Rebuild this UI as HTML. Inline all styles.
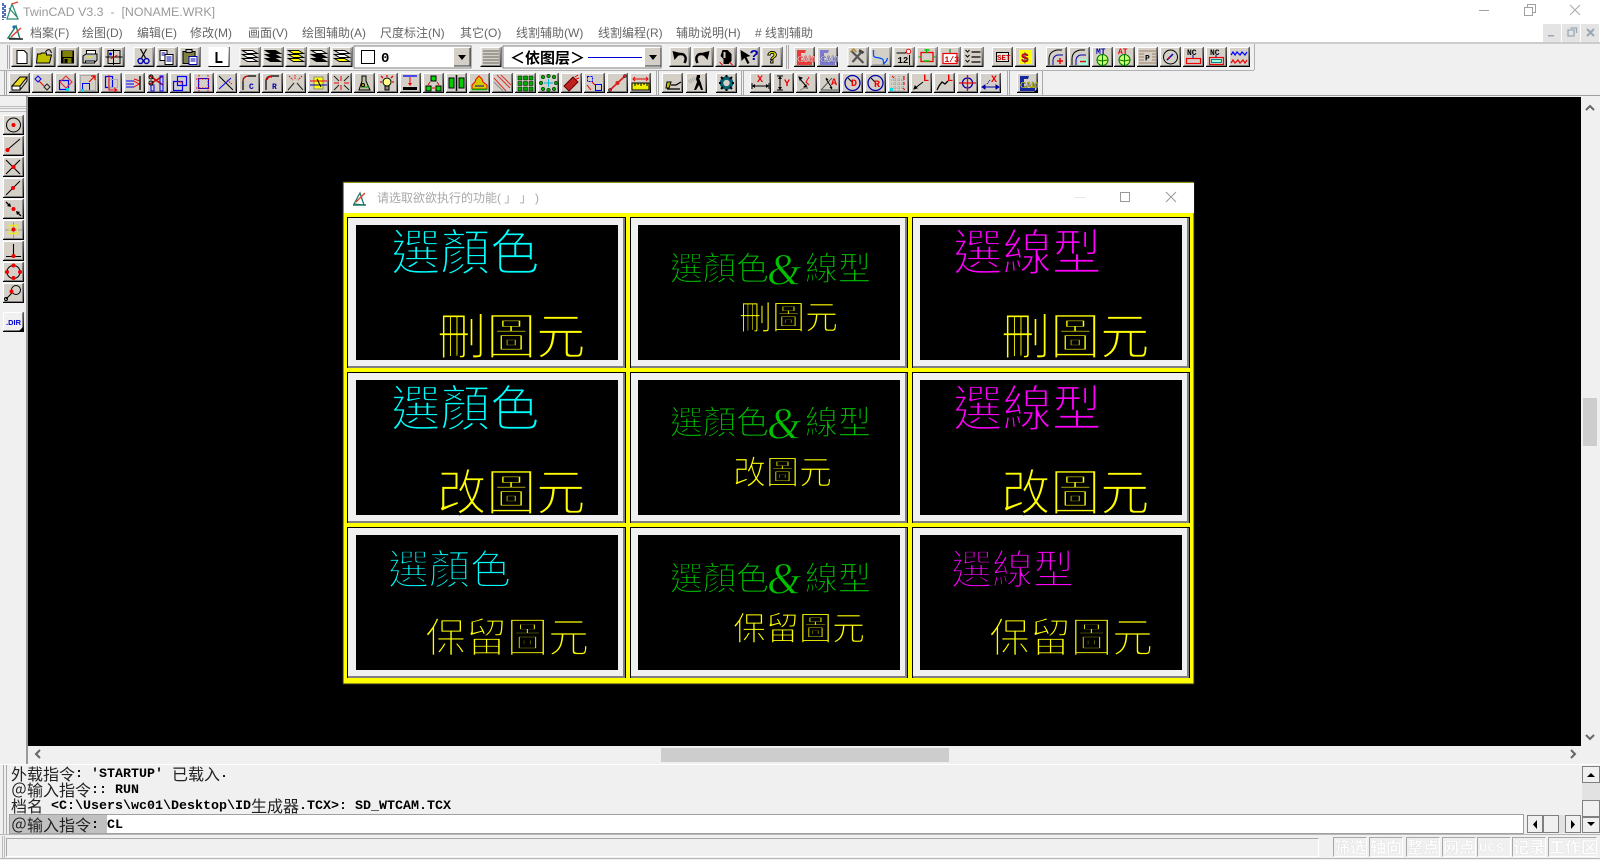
<!DOCTYPE html>
<html><head><meta charset="utf-8"><title>TwinCAD</title>
<style>
html,body{margin:0;padding:0;background:#f0f0f0;width:1600px;height:860px;overflow:hidden}
svg{display:block;position:absolute;left:0;top:0}
text{white-space:pre}
.m{font:bold 13.33px "Liberation Mono",monospace;fill:#000}
.c{font:16px "Noto Sans CJK SC",sans-serif;fill:#222}
.u{font:12px "Liberation Sans","Noto Sans CJK SC",sans-serif;fill:#666}
.s{font:bold 16px "Noto Sans CJK SC",sans-serif;fill:#fff;stroke:#d8d8d8;stroke-width:.3}
.k{font-family:"Noto Sans CJK TC",sans-serif;stroke:#000;paint-order:normal}
.b{font:bold 8px "Liberation Mono",monospace}
</style></head><body>
<svg width="1600" height="860" viewBox="0 0 1600 860" xmlns="http://www.w3.org/2000/svg">
<defs>
<g id="f"><path fill="#d4d0c8" d="M0 0h21v20H0z"/><path fill="#fff" d="M0 0h19v1H1v17H0z"/><path fill="#808080" d="M19 1h1v18H1v-1h18z"/><path fill="#000" d="M20.500 0h.5v20H0v-1h20z"/></g>
<g id="ly"><path d="M3 3.500h10l5 3H8zM3 7.500h10l5 3H8zM3 11.500h10l5 3H8z" stroke="#000" stroke-width="1"/></g>
</defs>
<rect width="1600" height="860" fill="#f0f0f0"/>
<!-- title -->
<rect width="1600" height="42" fill="#fff"/>
<path d="M3 3v17M5 5v13" stroke="#1a3ea8" stroke-width="1.500" stroke-dasharray="3 1"/><path d="M7 19l5-15 6 15zM9 8l8 9" fill="none" stroke="#2a8a70" stroke-width="1.200"/><path d="M12 4l6-2" stroke="#e04030" stroke-width="1.200"/>
<text x="23" y="16" style="font:12.400px 'Liberation Sans',sans-serif;fill:#9a9a9a">TwinCAD V3.3  -  [NONAME.WRK]</text>
<path d="M1479 10.500h10" stroke="#a0a0a0"/><path d="M1524.500 7.500h8v8h-8zM1527.500 7.500v-3h8v8h-3" fill="none" stroke="#a0a0a0"/><path d="M1570 5l10 10M1580 5l-10 10" stroke="#a8a8a8" fill="none"/>
<path d="M1543 24h18v18h-18zM1562 24h18v18h-18zM1581 24h18v18h-18z" fill="#e4e4e4"/>
<path d="M1548 35h6v1.500h-6z" fill="#9aa6b4"/><path d="M1568 30h6v6h-6zM1570.500 28h6v5" fill="none" stroke="#9aa6b4" stroke-width="1.300"/><path d="M1587 29l7 7M1594 29l-7 7" stroke="#9aa6b4" stroke-width="2"/>
<!-- menu -->
<g transform="translate(7 24)"><path d="M1 14l8-12 4 13z" fill="none" stroke="#227a66" stroke-width="1.400"/><path d="M4 13l10-9" stroke="#e04030" stroke-width="1.500"/><path d="M2 15h14" stroke="#222" stroke-width="1.500"/><circle cx="7" cy="3" r="1.600" fill="#1f6fb0"/></g>
<g class="u">
<text class="u" x="30" y="37">档案(F)</text><text class="u" x="82" y="37">绘图(D)</text><text class="u" x="137" y="37">编辑(E)</text><text class="u" x="190" y="37">修改(M)</text><text class="u" x="248" y="37">画面(V)</text><text class="u" x="302" y="37">绘图辅助(A)</text><text class="u" x="380" y="37">尺度标注(N)</text><text class="u" x="460" y="37">其它(O)</text><text class="u" x="516" y="37">线割辅助(W)</text><text class="u" x="598" y="37">线割编程(R)</text><text class="u" x="676" y="37">辅助说明(H)</text><text class="u" x="755" y="37"># 线割辅助</text>
</g>
<!-- toolbars chrome -->
<path d="M0 43h1600" stroke="#a8a8a8" fill="none"/>
<path d="M0 70.500h1254M1254.500 44v26" stroke="#b0b0b0" fill="none"/>
<path d="M7.500 45v24M9.500 45v24M4.500 71v24M6.500 71v24" stroke="#a8a8a8" fill="none"/>
<path d="M0 95.500h1600" stroke="#a0a0a0"/>
<path d="M786.500 45v24M788.500 45v24M656.500 71v24M658.500 71v24M741.500 71v24M743.500 71v24M1007.500 71v24M1009.500 71v24M1042.500 71v24" stroke="#a8a8a8" fill="none"/>
<!-- toolbar 1 -->
<g transform="translate(11.500 47)"><use href="#f"/><path d="M5.500 3.500h7l3 3v10h-10z" fill="#fff" stroke="#000"/></g>
<g transform="translate(34.500 47)"><use href="#f"/><path d="M2 16l1-9h3l1-1h5v2h5l-2 8z" fill="#c0c000" stroke="#000"/><path d="M11 5c2-3 4-3 5-1l1 2" fill="none" stroke="#000"/></g>
<g transform="translate(57.500 47)"><use href="#f"/><path d="M3.500 3.500h13v13h-13z" fill="#000"/><path d="M5 4h10v6H5zM6 11h8v5H6z" fill="#808000"/><path d="M7 12h3v4H7z" fill="#000"/></g>
<g transform="translate(80.500 47)"><use href="#f"/><path d="M6 3.500h9v5H6z" fill="#fff" stroke="#000"/><path d="M2.500 9l3-2h11v6l-3 3h-11z" fill="#c0c0c0" stroke="#000"/><path d="M6 10h6" stroke="#ee0"/><path d="M5 14h9v2H5z" fill="#fff" stroke="#000"/></g>
<g transform="translate(103.500 47)"><use href="#f"/><path d="M4.500 3.500h12v13h-12z" fill="#d4d0c8" stroke="#000"/><path d="M10 2v16M2 10h17" stroke="#000"/><path d="M7 12l7-4" stroke="#e00"/><circle cx="7" cy="7" r="1.500" fill="#00f"/></g>
<g transform="translate(133.500 47)"><use href="#f"/><path d="M7 2l5 9M13 2l-5 9" stroke="#000" stroke-width="1.200"/><circle cx="7" cy="14" r="2.500" fill="none" stroke="#00a" stroke-width="1.400"/><circle cx="13" cy="14" r="2.500" fill="none" stroke="#00a" stroke-width="1.400"/></g>
<g transform="translate(156.500 47)"><use href="#f"/><path d="M3.500 3.500h7v10h-7z" fill="#fff" stroke="#000"/><path d="M8.500 7.500h8v10h-8z" fill="#fff" stroke="#000"/><path d="M10 10h5M10 12h5M10 14h5M5 6h4M5 8h3" stroke="#00a"/></g>
<g transform="translate(179.500 47)"><use href="#f"/><path d="M3.500 4.500h12v12h-12z" fill="#808040" stroke="#000"/><path d="M6.500 2.500h6v3h-6z" fill="#c0c0c0" stroke="#000"/><path d="M9.500 9.500h8v8h-8z" fill="#fff" stroke="#00a"/><path d="M11 12h5M11 14h5" stroke="#00a"/></g>
<g transform="translate(208.500 47)"><use href="#f"/><rect x="1" y="1" width="19" height="18" fill="#fff"/><path d="M8 5v10h6" fill="none" stroke="#000" stroke-width="2"/></g>
<g transform="translate(239.500 47)"><use href="#f"/><g fill="#fff"><use href="#ly"/></g></g>
<g transform="translate(262.500 47)"><use href="#f"/><g fill="#000"><use href="#ly"/></g></g>
<g transform="translate(285.500 47)"><use href="#f"/><g fill="#ff0"><use href="#ly"/></g></g>
<g transform="translate(308.500 47)"><use href="#f"/><path d="M3 3.500h10l5 3H8z" fill="#fff" stroke="#000"/><path d="M3 7.500h10l5 3H8zM3 11.500h10l5 3H8z" fill="#000" stroke="#000"/></g>
<g transform="translate(331.500 47)"><use href="#f"/><path d="M3 3.500h10l5 3H8zM3 7.500h10l5 3H8z" fill="#fff" stroke="#000"/><path d="M3 11.500h10l5 3H8z" fill="#ff0" stroke="#000"/></g>
<rect x="354" y="46" width="117" height="22" fill="#fff" stroke="#808080"/>
<rect x="361.500" y="50.500" width="13" height="13" fill="#fff" stroke="#000"/>
<text class="m" x="381" y="62" style="font-size:14px">0</text>
<g transform="translate(454 48)"><rect width="16" height="18" fill="#d4d0c8"/><path d="M0 18h16V0" stroke="#333" fill="none"/><path d="M4 7h8l-4 5z"/></g>
<g transform="translate(480.500 47)"><use href="#f"/><path d="M3 4h15M3 7h15M3 10h15M3 13h15M3 16h15" stroke="#000" stroke-dasharray="1 1"/></g>
<rect x="503" y="46" width="158" height="22" fill="#fff" stroke="#808080"/>
<text x="510" y="63" style="font:bold 15px 'Noto Sans CJK TC',sans-serif">＜依图层＞</text>
<path d="M588 57.500h54" stroke="#00d"/>
<g transform="translate(645 48)"><rect width="16" height="18" fill="#d4d0c8"/><path d="M0 18h16V0" stroke="#333" fill="none"/><path d="M4 7h8l-4 5z"/></g>
<g transform="translate(669.500 47)"><use href="#f"/><path d="M15 16c3-6 0-11-8-8" fill="none" stroke="#000" stroke-width="2.500"/><path d="M3 4l2 9 6-7z"/></g>
<g transform="translate(692.500 47)"><use href="#f"/><path d="M5 16c-3-6 0-11 8-8" fill="none" stroke="#000" stroke-width="2.500"/><path d="M17 4l-2 9-6-7z"/></g>
<g transform="translate(715.500 47)"><use href="#f"/><path d="M7 3h5l4 4v7l-3 3H8V12L5 9z"/><path d="M4 15l3 3M14 15l3 3" stroke="#e00"/><path d="M8 5h2v6H8z" fill="#ccc"/></g>
<g transform="translate(738.500 47)"><use href="#f"/><path d="M2 3l10 6-4 1 3 6-2 1-3-6-3 3z"/><text x="11" y="13" style="font:bold 15px 'Liberation Sans';fill:#00a">?</text></g>
<g transform="translate(761.500 47)"><use href="#f"/><text x="5.500" y="16" style="font:bold 17px 'Liberation Sans';fill:#ff0;stroke:#000;stroke-width:.9">?</text></g>
<g transform="translate(794 47)"><use href="#f"/><path d="M3 3h9l-1 3H7v9h11v3H3z" fill="#f02828" opacity=".9"/><text x="3" y="15" style="font:bold 8px 'Liberation Sans';fill:#fff;stroke:#c00;stroke-width:.4">CAM</text></g>
<g transform="translate(817 47)"><use href="#f"/><path d="M3 3h9l-1 3H7v9h11v3H3z" fill="#7070d0" opacity=".9"/><text x="3" y="15" style="font:bold 8px 'Liberation Sans';fill:#fff;stroke:#338;stroke-width:.4">CAM</text></g>
<g transform="translate(847.500 47)"><use href="#f"/><path d="M4 4l12 12M5 15L14 5" stroke="#555" stroke-width="2.200"/><path d="M12 2l5 3-2 2-4-2z" fill="#444"/><path d="M3 5l3-3 3 3" stroke="#b08a30" fill="none" stroke-width="1.500"/></g>
<g transform="translate(870.500 47)"><use href="#f"/><path d="M3 3v5c0 3 3 2 6 3s4 1 4 4v2l3-3 1-3" fill="none" stroke="#0050ff" stroke-width="1.300"/><path d="M2 18h16" stroke="#888"/></g>
<g transform="translate(893.500 47)"><use href="#f"/><path d="M3 6h9l2-2M16 8v10" fill="none" stroke="#000"/><circle cx="15" cy="4.500" r="2.200" fill="#fff" stroke="#e00"/><text x="4" y="16" class="b" style="font-size:9px">12</text></g>
<g transform="translate(916.500 47)"><use href="#f"/><rect x="4.500" y="5.500" width="12" height="9" fill="none" stroke="#e00" stroke-width="1.300"/><path d="M10 2v4M2 10h3M16 10h3" stroke="#0a0"/><path d="M8 3h5M7 14h6" stroke="#0c0" stroke-width="1.500"/></g>
<g transform="translate(939.500 47)"><use href="#f"/><path d="M10.500 2v4" stroke="#070"/><rect x="3.500" y="6.500" width="14" height="10" fill="#fff" stroke="#e00" stroke-width="1.200"/><text x="5" y="15" class="b" style="fill:#c00">1/3</text></g>
<g transform="translate(962.500 47)"><use href="#f"/><path d="M9 5h9M9 10h9M9 15h9" stroke="#000" stroke-width="1.300"/><path d="M3 3l2 2 2-2M3 8l2 2 2-2M3 13l2 2 2-2" fill="none" stroke="#000"/></g>
<g transform="translate(992 47)"><use href="#f"/><rect x="4.500" y="5.500" width="12" height="9" fill="#e8e4dc" stroke="#000"/><text x="5" y="13" class="b" style="font-size:7.500px;fill:#c00">SET</text></g>
<g transform="translate(1015 47)"><use href="#f"/><rect x="4" y="3" width="13" height="14" fill="#ff0"/><text x="6" y="15" style="font:bold 13px 'Liberation Mono';fill:#e00;stroke:#00a;stroke-width:.3">$</text></g>
<g transform="translate(1046 47)"><use href="#f"/><path d="M3 18v-6c0-5 3-8 8-9h5" fill="none" stroke="#000"/><path d="M7 18v-5c0-2 2-5 5-5h5" fill="none" stroke="#00a"/><path d="M14 11v6M11 14h6" stroke="#e00" stroke-width="1.500"/></g>
<g transform="translate(1069 47)"><use href="#f"/><path d="M3 18v-6c0-5 3-8 8-9h5" fill="none" stroke="#000"/><path d="M7 18v-5c0-2 2-5 5-5h5" fill="none" stroke="#00a"/><rect x="10" y="12" width="8" height="6" fill="#9fd"/><path d="M11 14.500h6" stroke="#e00" stroke-width="1.500"/></g>
<g transform="translate(1092 47)"><use href="#f"/><text x="4" y="7" class="b" style="fill:#00a">MT</text><circle cx="10.500" cy="13" r="5.500" fill="#cf6" stroke="#070"/><path d="M10.500 8v10M5.500 13l5 1 5-1" stroke="#070" fill="none"/></g>
<g transform="translate(1114 47)"><use href="#f"/><text x="4" y="7" class="b" style="fill:#e00">AT</text><circle cx="10.500" cy="13" r="5.500" fill="#cf6" stroke="#070"/><path d="M10.500 8v10M5.500 13l5 1 5-1" stroke="#070" fill="none"/></g>
<g transform="translate(1137 47)"><use href="#f"/><path d="M2 4h17M2 7h17M2 10h17M2 13h17M2 16h17" stroke="#a08060"/><rect x="7" y="6" width="8" height="8" fill="#d4d0c8"/><text x="8" y="13.500" class="b">P</text></g>
<g transform="translate(1160 47)"><use href="#f"/><circle cx="10.500" cy="10" r="7" fill="none" stroke="#000"/><path d="M7 13l6-6" stroke="#00a" stroke-width="1.500"/><circle cx="9" cy="11" r="1" fill="#e00"/></g>
<g transform="translate(1183 47)"><use href="#f"/><text x="4" y="8" class="b">NC</text><path d="M10 8v3" stroke="#00a"/><rect x="3.500" y="11.500" width="14" height="5" fill="none" stroke="#e00" stroke-width="1.200"/></g>
<g transform="translate(1206 47)"><use href="#f"/><text x="4" y="8" class="b">NC</text><path d="M10 8v3" stroke="#00a"/><rect x="3.500" y="10.500" width="14" height="7" fill="none" stroke="#e00" stroke-width="1.200"/><rect x="5.500" y="12.500" width="10" height="3" fill="#9fd" stroke="#088"/></g>
<g transform="translate(1229 47)"><use href="#f"/><path d="M2 8l2-3 2 3 2-3 3 3 2-3 3 3 2-3" fill="none" stroke="#00f" stroke-width="1.200"/><path d="M2 16l2-3 2 3 3-3 2 3 3-3 2 3 2-3" fill="none" stroke="#e00" stroke-width="1.200"/></g>
<!-- toolbar 2 -->
<g transform="translate(9 73)"><use href="#f"/><path d="M3 13l8-9h7l-7 9z" fill="#e8d820" stroke="#000"/><path d="M3 13v4h8v-4z" fill="#fff" stroke="#000"/><path d="M11 17l7-9V4" fill="none" stroke="#000"/></g>
<g transform="translate(32 73)"><use href="#f"/><path d="M3 6l3-3 3 3-3 3z" fill="none" stroke="#00f"/><path d="M7 8l5 5" stroke="#e00"/><path d="M12 14l3-3 3 3-3 3z" fill="none" stroke="#222"/></g>
<g transform="translate(55 73)"><use href="#f"/><path d="M4.500 7.500h9v9h-9z" fill="none" stroke="#00f" stroke-width="1.200"/><path d="M11 3l6 6-6 6-6-6z" fill="none" stroke="#e03030" stroke-width="1.100"/><rect x="11" y="15" width="3" height="3" fill="#0dd"/></g>
<g transform="translate(78 73)"><use href="#f"/><path d="M4.500 10.500h7v7h-7z" fill="none" stroke="#00f"/><path d="M2.500 2.500h15v15h-15z" fill="none" stroke="#aaa"/><path d="M11 9l6-6M13 3h4v4" fill="none" stroke="#e00" stroke-width="1.200"/><rect x="3" y="16" width="3" height="3" fill="#0dd"/></g>
<g transform="translate(101 73)"><use href="#f"/><path d="M4.500 3.500h7v11h-7z" fill="none" stroke="#00f" stroke-width="1.200"/><path d="M7.500 6.500h9v8h-9z" fill="none" stroke="#aaa"/><path d="M8 2v15h8M13 15l3 2-3 2" fill="none" stroke="#e00"/></g>
<g transform="translate(124 73)"><use href="#f"/><path d="M2 8h8M2 11h8M2 14h8" stroke="#00f"/><path d="M10 8l5 3-5 3" fill="none" stroke="#e00"/><path d="M16 3v14" stroke="#000" stroke-width="1.300"/><path d="M10 6l6 2" stroke="#e00"/></g>
<g transform="translate(147 73)"><use href="#f"/><path d="M3 3l13 9M3 11l13-8" stroke="#c00" stroke-width="1.500"/><rect x="4" y="12" width="3" height="6" fill="none" stroke="#00f"/><rect x="13" y="3" width="3" height="15" fill="none" stroke="#00f"/><circle cx="4" cy="4" r="2" fill="none" stroke="#000"/><circle cx="4" cy="10" r="2" fill="none" stroke="#000"/></g>
<g transform="translate(170 73)"><use href="#f"/><path d="M3.500 8.500h9v9h-9z" fill="none" stroke="#00f" stroke-width="1.200"/><path d="M7.500 3.500h9v9h-9z" fill="none" stroke="#00f" stroke-width="1.200"/><path d="M7 9h5v3" fill="none" stroke="#e00" stroke-dasharray="1.500 1"/></g>
<g transform="translate(193 73)"><use href="#f"/><path d="M5.500 5.500h10v10h-10z" fill="none" stroke="#00f"/><path d="M3 6h15M3 15h15M6 2v17M15 2v17" stroke="#e00" stroke-dasharray="1.500 1.500"/></g>
<g transform="translate(216 73)"><use href="#f"/><path d="M3 3l14 14" stroke="#000"/><path d="M3 16l12-11" stroke="#00f"/><path d="M11 7l5 4" stroke="#e00" stroke-dasharray="1.500 1"/></g>
<g transform="translate(239 73)"><use href="#f"/><path d="M4 17V8c0-3 2-5 6-5h7" fill="none" stroke="#000" stroke-width="1.200"/><path d="M4 8c0-2 2-5 5-5" stroke="#e00" fill="none"/><text x="10" y="16" class="b" style="fill:#00a">C</text></g>
<g transform="translate(262 73)"><use href="#f"/><path d="M4 17V8c0-3 2-5 6-5h7" fill="none" stroke="#000" stroke-width="1.200"/><path d="M5 7c0-2 2-4 5-3" stroke="#e00" fill="none" stroke-width="1.600"/><text x="10" y="16" class="b" style="fill:#00a">R</text></g>
<g transform="translate(285 73)"><use href="#f"/><path d="M3 17L9 10M18 17l-6-7" stroke="#222"/><path d="M4 3l4 4M17 3l-4 4M10 2v5" stroke="#e00" stroke-dasharray="1.500 1"/></g>
<g transform="translate(308 73)"><use href="#f"/><rect x="6" y="4" width="9" height="12" fill="#ff0" stroke="#888"/><path d="M2 8h17" stroke="#e00"/><path d="M2 12h17" stroke="#00a"/><path d="M9 6l4 8" stroke="#000"/></g>
<g transform="translate(331 73)"><use href="#f"/><path d="M3 3l5 5M18 3l-5 5M3 17l5-5M18 17l-5-5" stroke="#222"/><path d="M10 3v5M10 12v5M3 10h5M13 10h5" stroke="#e00"/></g>
<g transform="translate(354 73)"><use href="#f"/><path d="M5 17l3-9V3h4v5l4 9z" fill="#c0c0a0" stroke="#000"/><path d="M7 14h8" stroke="#080"/><circle cx="9" cy="12" r="1.500" fill="#e0c000" stroke="#000"/></g>
<g transform="translate(377 73)"><use href="#f"/><circle cx="10" cy="9" r="4" fill="#ff8" stroke="#000"/><path d="M8 13h4v4H8z" fill="#888" stroke="#000"/><path d="M10 2v2M3 9h2M15 9h2M4 3l2 2M16 3l-2 2" stroke="#e00" stroke-width="1.300"/></g>
<g transform="translate(400 73)"><use href="#f"/><path d="M3 3h14" stroke="#00f" stroke-width="1.300"/><path d="M10 4v8" stroke="#e00"/><path d="M8 10l2 3 2-3z" fill="#e00"/><rect x="3" y="14" width="14" height="3" fill="#000"/></g>
<g transform="translate(423 73)"><use href="#f"/><rect x="8" y="3" width="5" height="5" fill="#0d0" stroke="#000"/><rect x="3" y="13" width="5" height="5" fill="#0d0" stroke="#000"/><rect x="13" y="13" width="5" height="5" fill="#0d0" stroke="#000"/><path d="M7 9l-2 3M14 9l2 3M9 15h3" stroke="#e00"/></g>
<g transform="translate(446 73)"><use href="#f"/><rect x="3" y="5" width="5" height="10" fill="#0c0" stroke="#000"/><rect x="13" y="5" width="5" height="10" fill="#0c0" stroke="#000"/><path d="M10.500 2v16" stroke="#000" stroke-width="1.500"/></g>
<g transform="translate(469 73)"><use href="#f"/><path d="M3 12l3-3 1-3 3-3 3 3 1 3 4 3v4H3z" fill="#d8c800" stroke="#e00"/><path d="M6 13h9" stroke="#00a"/><path d="M3 16.500h15" stroke="#0a0" stroke-width="1.500"/></g>
<g transform="translate(492 73)"><use href="#f"/><path d="M2 5l12 13M5 2l13 13M9 2l10 10" stroke="#e03030"/><path d="M2 9l9 9" stroke="#888"/></g>
<g transform="translate(515 73)"><use href="#f"/><path d="M3 3h4v4H3zM8.500 3h4v4h-4zM14 3h4v4h-4zM3 8.500h4v4H3zM8.500 8.500h4v4h-4zM14 8.500h4v4h-4zM3 14h4v4H3zM8.500 14h4v4h-4zM14 14h4v4h-4z" fill="#0a0" stroke="#000" stroke-width=".5"/></g>
<g transform="translate(538 73)"><use href="#f"/><g fill="#0a0" stroke="#000" stroke-width=".5"><circle cx="5" cy="4" r="1.800"/><circle cx="10.500" cy="3" r="1.800"/><circle cx="16" cy="4" r="1.800"/><circle cx="3" cy="10" r="1.800"/><circle cx="18" cy="10" r="1.800"/><circle cx="5" cy="16" r="1.800"/><circle cx="10.500" cy="17" r="1.800"/><circle cx="16" cy="16" r="1.800"/></g><path d="M6 10h9M10.500 6v8" stroke="#0bd"/></g>
<g transform="translate(561 73)"><use href="#f"/><path d="M3 13l9-9 5 5-9 9z" fill="#c02020" stroke="#600"/><path d="M14 4l3-2M15 6l3-1" stroke="#e00"/></g>
<g transform="translate(584 73)"><use href="#f"/><path d="M3.500 3.500h5v5h-5z" fill="none" stroke="#00f" stroke-dasharray="2 1"/><path d="M11.500 11.500h6v6h-6z" fill="none" stroke="#00f"/><path d="M8 9l3 3" stroke="#e00"/><path d="M3 12l4 5" stroke="#e00"/></g>
<g transform="translate(607 73)"><use href="#f"/><path d="M3 17L18 3" stroke="#e02020" stroke-width="1.800"/><circle cx="10.500" cy="10" r="2" fill="#e02020"/><circle cx="3" cy="17" r="1.500" fill="#e02020" stroke="#000" stroke-width=".5"/><circle cx="18" cy="3" r="1.500" fill="#e02020" stroke="#000" stroke-width=".5"/></g>
<g transform="translate(630 73)"><use href="#f"/><path d="M3 6h15M5 4l-2 2 2 2M16 4l2 2-2 2" fill="none" stroke="#e00"/><rect x="2" y="10" width="17" height="7" fill="#ee0" stroke="#000"/><path d="M5 10v3M8 10v2M11 10v3M14 10v2M17 10v3" stroke="#000"/></g>
<g transform="translate(662 73)"><use href="#f"/><path d="M5 9l-1 6h3l2-6z" fill="#c8c000" stroke="#000"/><path d="M9 12h5l5-3M5 16h13" fill="none" stroke="#000" stroke-width="1.300"/></g>
<g transform="translate(686 73)"><use href="#f"/><path d="M3 9l7-4" stroke="#aaa" stroke-width="4" stroke-dasharray="1 1"/><path d="M11 2h3v3h-1l2 5 2 7h-2l-2-5-3 5H8l3-8-1-3z"/></g>
<g transform="translate(716 73)"><use href="#f"/><circle cx="10.500" cy="10" r="5" fill="none" stroke="#006070" stroke-width="3.500"/><g stroke="#000" stroke-width="2"><path d="M10.500 2v2M10.500 16v2M3 10h2M16 10h2M5 4l2 2M16 4l-2 2M5 16l2-2M16 16l-2-2"/></g></g>
<g transform="translate(750 73)"><use href="#f"/><text x="7" y="9" class="b" style="font-size:10px;fill:#e00">X</text><path d="M2 13h17M2 10v6M19 10v6" stroke="#000"/><path d="M2 13l3-2v4zM19 13l-3-2v4z"/></g>
<g transform="translate(773 73)"><use href="#f"/><path d="M7 3v14M4 3h6M4 17h6" stroke="#000"/><path d="M7 3l-2 3h4zM7 17l-2-3h4z"/><text x="11" y="13" class="b" style="font-size:10px;fill:#e00">Y</text></g>
<g transform="translate(796 73)"><use href="#f"/><path d="M3 5l8 9M3 4l3 1-2 2zM11 15l-3-1 2-2z" stroke="#000" fill="#000"/><path d="M13 4l-3 5 3 3" fill="none" stroke="#e00"/><path d="M4 17l7-3" stroke="#888"/></g>
<g transform="translate(819 73)"><use href="#f"/><path d="M2 17h17M2 17L13 5" stroke="#555"/><path d="M7 6l6 9M7 5l2 2M13 16l-2-2" stroke="#000"/><text x="12" y="12" class="b" style="font-size:10px;fill:#e00">A</text></g>
<g transform="translate(842 73)"><use href="#f"/><circle cx="10.500" cy="10" r="7.500" fill="none" stroke="#00a" stroke-width="1.300"/><path d="M6 5l4 4" stroke="#000"/><text x="9" y="13" class="b" style="font-size:10px;fill:#e00">D</text></g>
<g transform="translate(865 73)"><use href="#f"/><circle cx="10.500" cy="10" r="7.500" fill="none" stroke="#00a" stroke-width="1.300"/><path d="M6 5l4 4" stroke="#000"/><text x="9" y="14" class="b" style="font-size:10px;fill:#e00">R</text></g>
<g transform="translate(888 73)"><use href="#f"/><path d="M3 7h14M3 11h14M3 15h14M7 3v15M11 3v15M15 3v15" stroke="#999" stroke-dasharray="1 1"/><path d="M4 3l2 2M16 3v4M16 9v3M15 15l2 2" stroke="#e00"/><rect x="2" y="15" width="3" height="3" fill="#0dd"/></g>
<g transform="translate(911 73)"><use href="#f"/><path d="M3 16l9-7M3 16l1-3 2 2z" fill="#000" stroke="#000"/><text x="12" y="8" class="b" style="font-size:10px;fill:#e00">L</text></g>
<g transform="translate(934 73)"><use href="#f"/><path d="M3 17l2-4 3-4 3 2 3-3" fill="none" stroke="#000" stroke-width="1.300"/><text x="13" y="8" class="b" style="font-size:10px;fill:#e00">L</text></g>
<g transform="translate(957 73)"><use href="#f"/><circle cx="10.500" cy="10" r="5" fill="none" stroke="#00a" stroke-width="1.300"/><path d="M2 10h17M10.500 2v16" stroke="#e00" stroke-width="1.300"/></g>
<g transform="translate(980 73)"><use href="#f"/><path d="M2 14h17M2 14l3-2v4zM19 14l-3-2v4z" stroke="#00a" fill="#00a"/><path d="M7 11l3-4" stroke="#00a" stroke-dasharray="1 1"/><text x="11" y="9" class="b" style="font-size:10px;fill:#e00">X</text></g>
<g transform="translate(1017 73)"><use href="#f"/><path d="M3 3h9l-1 3H7v9h11v3H3z" fill="#1428a0"/><text x="3" y="15" style="font:bold 8px 'Liberation Sans';fill:#ee0;stroke:#006;stroke-width:.3">CAM</text><path d="M17 19l3-3v3z" fill="#000"/></g>
<!-- left toolbar -->
<rect x="0" y="96" width="28" height="668" fill="#f0f0f0"/>
<path d="M0 106.500h26M0 108.500h26M0 111.500h26" stroke="#bdbdbd"/>
<path d="M27 96v668" stroke="#9a9a9a" stroke-width="2"/>
<g transform="translate(3 115)"><use href="#f"/><circle cx="10.500" cy="10" r="7" fill="none" stroke="#000"/><circle cx="10.500" cy="10" r="2" fill="#e00"/></g>
<g transform="translate(3 136)"><use href="#f"/><path d="M3 15L17 3" stroke="#000"/><circle cx="4.500" cy="14" r="2" fill="#e00"/></g>
<g transform="translate(3 157)"><use href="#f"/><path d="M3 3l14 14M17 3L3 17" stroke="#000" stroke-width="1.100"/><circle cx="10.500" cy="10" r="2" fill="#e00"/></g>
<g transform="translate(3 178)"><use href="#f"/><path d="M3 17L17 3" stroke="#000"/><circle cx="10" cy="10" r="2" fill="#e00"/></g>
<g transform="translate(3 199)"><use href="#f"/><path d="M3 3l4 4M18 17l-4-4" stroke="#000" stroke-width="1.300"/><path d="M8 8l-4-1 3-3zM13 12l4 1-3 3z"/><circle cx="10.500" cy="10" r="2" fill="#e00"/></g>
<g transform="translate(3 220)"><use href="#f"/><path d="M10.500 2v16M2 10h17" stroke="#999"/><rect x="6.500" y="5.500" width="8" height="8" fill="none" stroke="#ee0" stroke-width="1.500"/><circle cx="10.500" cy="9.500" r="2" fill="#e00"/></g>
<g transform="translate(3 241)"><use href="#f"/><path d="M10.500 3v13M3 15.500h15" stroke="#000" stroke-width="1.100"/><circle cx="10.500" cy="15" r="2" fill="#e00"/></g>
<g transform="translate(3 262)"><use href="#f"/><circle cx="10.500" cy="10" r="6.500" fill="none" stroke="#000"/><g fill="#e00"><circle cx="10.500" cy="3.500" r="2"/><circle cx="10.500" cy="16" r="2"/><circle cx="4" cy="10" r="2"/><circle cx="17" cy="10" r="2"/></g></g>
<g transform="translate(3 283)"><use href="#f"/><circle cx="13" cy="7" r="4.500" fill="none" stroke="#000"/><path d="M3 16l6-6" stroke="#000"/><circle cx="8.500" cy="8.500" r="2" fill="#e00"/><circle cx="3" cy="16" r="1.500" fill="none" stroke="#000"/></g>
<g transform="translate(3 312)"><use href="#f"/><rect x="1" y="1" width="18" height="17" fill="#f0f0f0"/><text x="3" y="13" style="font:bold 7.500px 'Liberation Sans';fill:#0000d0">.DIR</text><path d="M16 19l4-4v4z" fill="#000"/></g>
<!-- canvas -->
<rect x="28" y="97" width="1553" height="649" fill="#000"/>
<!-- scrollbars -->
<rect x="1581" y="97" width="19" height="667" fill="#f0f0f0"/>
<rect x="28" y="746" width="1553" height="18" fill="#f0f0f0"/>
<rect x="1583" y="398" width="14" height="48" fill="#cdcdcd"/>
<rect x="661" y="748" width="288" height="14" fill="#cdcdcd"/>
<path d="M1586 110l4-4 4 4" fill="none" stroke="#666" stroke-width="2"/>
<path d="M1586 735l4 4 4-4" fill="none" stroke="#666" stroke-width="2"/>
<path d="M40 750l-4 4 4 4" fill="none" stroke="#666" stroke-width="2"/>
<path d="M1571 750l4 4-4 4" fill="none" stroke="#666" stroke-width="2"/>
<!-- dialog -->
<rect x="343" y="182" width="851" height="502" fill="#ffff00" stroke="#2a2a2a"/>
<rect x="344" y="183" width="850" height="30" fill="#fff"/>
<g transform="translate(353 191)"><path d="M1 13l6-11 4 12z" fill="none" stroke="#227a66" stroke-width="1.300"/><path d="M3 11l9-9" stroke="#e04030" stroke-width="1.300"/><path d="M0 14h13" stroke="#227a66" stroke-width="1.500"/></g>
<text x="377" y="202" style="font:12px 'Liberation Sans','Noto Sans CJK SC',sans-serif;fill:#a8a8a8">请选取欲欲执行的功能( 」 」 )</text>
<path d="M1075 197.500h10" stroke="#e4e4e4"/><path d="M1120.500 192.500h9v9h-9z" fill="none" stroke="#999"/><path d="M1166 192l10 10M1176 192l-10 10" stroke="#999" fill="none"/>
<g id="cells">
<path fill="#f0f0f0" stroke="#000" d="M347.500 217.500h278v150h-278zM630.500 217.500h277v150h-277zM912.500 217.500h277v150h-277zM347.500 372.500h278v150h-278zM630.500 372.500h277v150h-277zM912.500 372.500h277v150h-277zM347.500 527.500h278v150h-278zM630.500 527.500h277v150h-277zM912.500 527.500h277v150h-277z"/>
<path fill="none" stroke="#808080" stroke-width="2" d="M624 218v149H348M906 218v149H631M1188 218v149H913M624 373v149H348M906 373v149H631M1188 373v149H913M624 528v149H348M906 528v149H631M1188 528v149H913"/>
<path fill="#000" d="M356 225h262v135H356zM638 225h262v135H638zM920 225h262v135H920zM356 380h262v135H356zM638 380h262v135H638zM920 380h262v135H920zM356 535h262v135H356zM638 535h262v135H638zM920 535h262v135H920z"/>
</g>
<g class="k" stroke-width="1.700">
<text x="391" y="270" font-size="49.500" fill="#0ff">選顏色</text>
<text x="437" y="354" font-size="49.500" fill="#ff0">刪圖元</text>
<text x="953" y="270" font-size="49.500" fill="#f0f">選線型</text>
<text x="1001" y="354" font-size="49.500" fill="#ff0">刪圖元</text>
<text x="391" y="426" font-size="49.500" fill="#0ff">選顏色</text>
<text x="437" y="510" font-size="49.500" fill="#ff0">改圖元</text>
<text x="953" y="426" font-size="49.500" fill="#f0f">選線型</text>
<text x="1001" y="510" font-size="49.500" fill="#ff0">改圖元</text>
<text x="388" y="584" font-size="41" fill="#0ff">選顏色</text>
<text x="425" y="652" font-size="41" fill="#ff0">保留圖元</text>
<text x="951" y="584" font-size="41" fill="#f0f">選線型</text>
<text x="989" y="652" font-size="41" fill="#ff0">保留圖元</text>
</g>
<g class="k" stroke-width="1.200">
<text x="670" y="280" font-size="33" fill="#00c000">選顏色</text><text x="805" y="280" font-size="33" fill="#00c000">線型</text>
<text x="670" y="434" font-size="33" fill="#00c000">選顏色</text><text x="805" y="434" font-size="33" fill="#00c000">線型</text>
<text x="670" y="590" font-size="33" fill="#00c000">選顏色</text><text x="805" y="590" font-size="33" fill="#00c000">線型</text>
<text x="739" y="329" font-size="33" fill="#ff0">刪圖元</text>
<text x="733" y="484" font-size="33" fill="#ff0">改圖元</text>
<text x="733" y="640" font-size="33" fill="#ff0">保留圖元</text>
</g>
<g style="font:italic 44px 'Liberation Serif',serif;fill:#00c000;stroke:#000;stroke-width:.7">
<text x="767" y="284">&amp;</text><text x="767" y="438">&amp;</text><text x="767" y="593">&amp;</text>
</g>
<!-- command area -->
<path d="M0 764.500h1600" stroke="#fff"/>
<path d="M3.500 765v69M6.500 765v69" stroke="#aaa"/>
<text class="c" x="11" y="780">外载指令</text><text class="m" x="75" y="777">: 'STARTUP'</text><text class="c" x="172" y="780">已载入</text><text class="m" x="220" y="777">.</text>
<text class="c" x="11" y="796">＠输入指令</text><text class="m" x="91" y="793">:: RUN</text>
<text class="c" x="11" y="812">档名</text><text class="m" x="51" y="809">&lt;C:\Users\wc01\Desktop\ID</text><text class="c" x="251" y="812">生成器</text><text class="m" x="299" y="809">.TCX&gt;: SD_WTCAM.TCX</text>
<rect x="9.500" y="814.500" width="1514" height="19" fill="#fff" stroke="#a0a0a0"/>
<rect x="10" y="815" width="97" height="18" fill="#c0c0c0"/>
<text class="c" x="11" y="831">＠输入指令</text><text class="m" x="91" y="828">:</text><text class="m" x="107" y="828">CL</text>
<rect x="1582" y="782" width="18" height="18" fill="#e2e2e2"/>
<rect x="1559" y="815" width="6" height="18" fill="#e2e2e2"/>
<g fill="#f0f0f0" stroke="#808080"><path d="M1527.500 815.500h15v17h-15zM1543.500 815.500h15v17h-15zM1565.500 815.500h15v17h-15z"/><path d="M1582.500 766.500h17v16h-17zM1582.500 800.500h17v16h-17zM1582.500 817.500h17v15h-17z"/></g>
<path d="M1537 820v9l-4-4.500zM1571 820v9l4-4.500zM1587 777h8l-4-4zM1587 822h8l-4 4z"/>
<!-- status -->
<path d="M0 834.500h1600" stroke="#b8b8b8"/><path d="M2.500 836v22M4.500 836v22" stroke="#bbb"/>
<path d="M6.500 856.500v-18h1312v18z" fill="none" stroke="#fff"/><path d="M6.500 856.500v-18h1312" fill="none" stroke="#a8a8a8"/>
<path d="M0 858.500h1600" stroke="#b8b8b8"/>
<g fill="none" stroke="#fff"><path d="M1333.500 837.500h33v19h-33zM1369.500 837.500h33v19h-33zM1406.500 837.500h33v19h-33zM1442.500 837.500h33v19h-33zM1477.500 837.500h33v19h-33zM1512.500 837.500h33v19h-33zM1548.500 837.500h48v19h-48z"/></g>
<g fill="none" stroke="#a8a8a8"><path d="M1333.500 856.500v-19h33M1369.500 856.500v-19h33M1406.500 856.500v-19h33M1442.500 856.500v-19h33M1477.500 856.500v-19h33M1512.500 856.500v-19h33M1548.500 856.500v-19h48"/></g>
<text class="s" x="1334" y="853">筛选</text><text class="s" x="1370" y="853">轴向</text><text class="s" x="1407" y="853">整点</text><text class="s" x="1443" y="853">网点</text><text class="s" x="1479" y="852" style="font:bold 14px 'Liberation Mono',monospace;fill:#fff">UCS</text><text class="s" x="1513" y="853">记录</text><text class="s" x="1549" y="853">工作区</text>
</svg>
</body></html>
